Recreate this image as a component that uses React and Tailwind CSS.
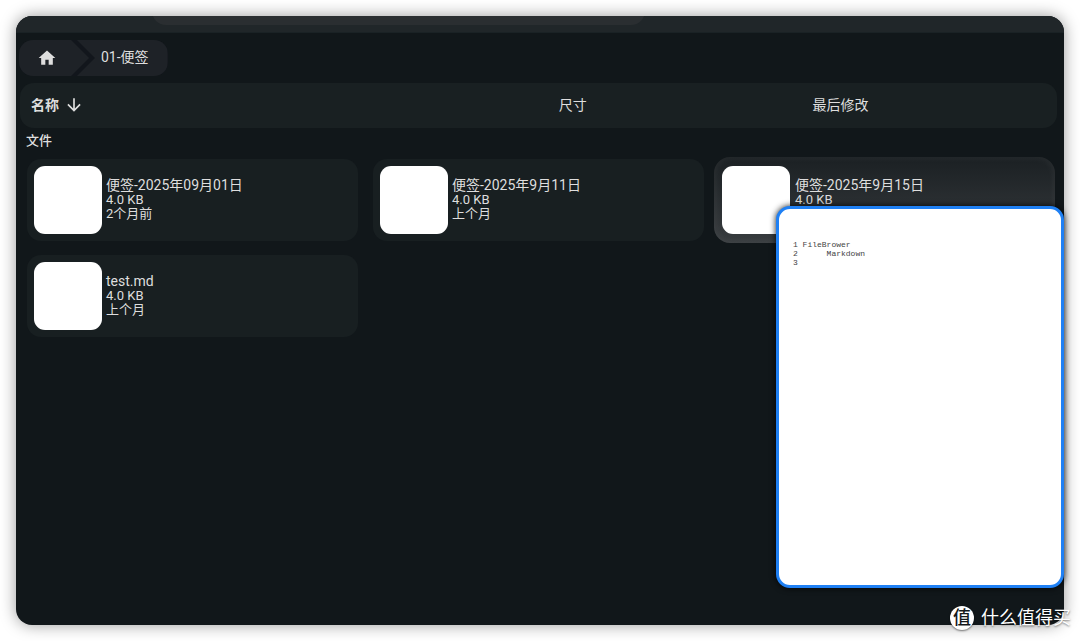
import { MdHome, MdArrowDownward } from 'react-icons/md';

const files = [
  { name: '便签-2025年09月01日', size: '4.0 KB', modified: '2个月前' },
  { name: '便签-2025年9月11日', size: '4.0 KB', modified: '上个月' },
  { name: '便签-2025年9月15日', size: '4.0 KB', modified: '上个月', active: true },
  { name: 'test.md', size: '4.0 KB', modified: '上个月' },
];

const Breadcrumbs = () => (
  <nav aria-label="breadcrumbs" className="flex h-9 w-fit mt-[7px] ml-[3px] rounded-[14px] overflow-hidden bg-[#12161c]">
    <a
      href="#home"
      aria-label="home"
      className="w-[70px] pl-[18px] flex items-center bg-[#1e2227] [clip-path:polygon(0_0,52px_0,100%_50%,52px_100%,0_100%)]"
    >
      <MdHome className="w-5 h-5" />
    </a>
    <a
      href="#notes"
      className="-ml-3 pl-6 pr-[19px] pb-0.5 flex items-center text-sm bg-[#1e2227] [clip-path:polygon(0_0,100%_0,100%_100%,0_100%,18px_50%)]"
    >
      01-便签
    </a>
  </nav>
);

const ListHeader = () => (
  <div className="flex items-center h-[45px] mt-[7px] ml-1 mr-[7px] px-[11px] pb-0.5 rounded-[14px] bg-[#192022] text-sm">
    <button type="button" className="w-[52%] flex items-center gap-[5px] font-bold">
      名称
      <MdArrowDownward className="w-5 h-5" />
    </button>
    <button type="button" className="w-1/4 text-left">尺寸</button>
    <button type="button" className="text-left">最后修改</button>
  </div>
);

const FileCard = ({ file }) => (
  <a
    href={`#${file.name}`}
    className={
      file.active
        ? 'flex items-center gap-[5px] -mx-[5px] -my-0.5 p-2 rounded-2xl bg-linear-to-b from-[#1b2023] to-[#383c3f] shadow-[inset_0_0_8px_rgba(255,255,255,0.07)]'
        : 'flex items-center gap-1 p-[7px] rounded-[14px] bg-[#181f21]'
    }
  >
    <span className="w-[68px] h-[68px] shrink-0 rounded-[11px] bg-white" />
    <span className="flex flex-col min-w-0 pb-0.5 text-[13px] leading-[14px]">
      <span className="text-sm leading-4">{file.name}</span>
      <span>{file.size}</span>
      <span>{file.modified}</span>
    </span>
  </a>
);

const Preview = () => (
  <div className="absolute right-0 top-[190px] w-72 h-[382px] rounded-[14px] border-3 border-[#1f80f4] bg-white shadow-[0_0_6px_rgba(0,0,0,0.9)] pt-[31px] pl-[14px]">
    <pre className="font-['Liberation_Mono',monospace] text-[8px] leading-[9px] text-[#444]">
      {'1 FileBrower\n2      Markdown\n3'}
    </pre>
  </div>
);

const Watermark = () => (
  <div className="absolute right-[9px] bottom-[9px] flex items-center gap-[7px] text-white">
    <span className="w-6 h-6 rounded-full bg-white text-[#15191c] text-lg leading-6 font-medium flex items-center justify-center shadow-[0_1px_2px_rgba(0,0,0,0.5)]">
      值
    </span>
    <span className="text-lg leading-7 [text-shadow:0_1px_2px_rgba(0,0,0,0.5)]">什么值得买</span>
  </div>
);

const App = () => {
  return (
    <div className="relative min-h-screen p-4 flex bg-white font-[Roboto,'Noto_Sans_CJK_SC',sans-serif]">
      <div className="relative flex-1 rounded-2xl bg-[#11171a] text-[#dedede] shadow-[0_0_16px_rgba(0,0,0,0.4)]">
        <header className="h-[17px] rounded-t-2xl overflow-hidden bg-[#202629] border-b border-[#1a2225]">
          <div className="ml-[13%] w-[47%] h-[30px] -mt-[21px] rounded-[14px] bg-[#2a2e31]" />
        </header>

        <Breadcrumbs />
        <ListHeader />

        <main className="pl-[11px] pr-[14px]">
          <h2 className="text-[13px] leading-[18px] font-medium mt-1 mb-[9px] -ml-px">文件</h2>
          <div className="grid grid-cols-3 gap-x-[15px] gap-y-[14px]">
            {files.map((file) => (
              <FileCard key={file.name} file={file} />
            ))}
          </div>
        </main>

        <Preview />
      </div>
      <Watermark />
    </div>
  );
};

export default App;
